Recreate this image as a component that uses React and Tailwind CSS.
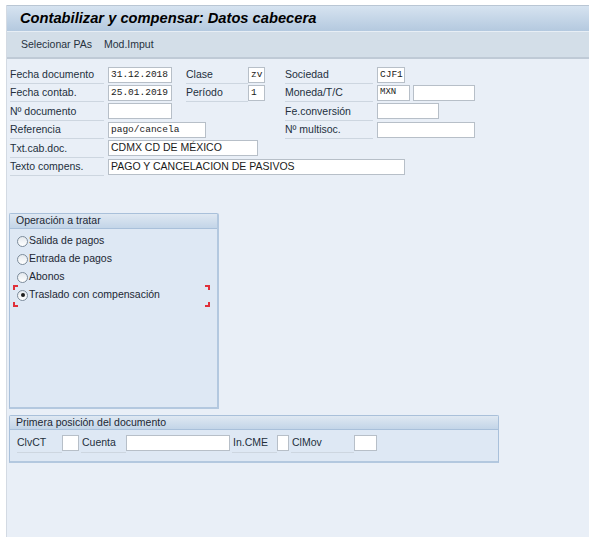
import { useState } from 'react';

const font = { fontFamily: '"Liberation Sans", Arial, sans-serif' };

function Label({ w, children, className = '' }) {
    return (
        <div
            className={`h-full flex items-center border-b border-[#cdd6e0] text-[10.5px] leading-none whitespace-nowrap ${className}`}
            style={{ width: w }}
        >
            <span className="text-[#23303d]">{children}</span>
        </div>
    );
}

function Field({ w, value = '', mono = false, className = '' }) {
    return (
        <div
            className={`h-[16px] bg-white border border-[#b7bfc8] flex items-center text-[#1a1a1a] whitespace-nowrap overflow-hidden ${mono ? 'pl-[2px] font-["Liberation_Mono",monospace] text-[9.5px]' : 'px-[2px] text-[10.5px]'} ${className}`}
            style={{ width: w }}
        >
            {value}
        </div>
    );
}

function Radio({ checked, label }) {
    return (
        <div className="h-[18px] flex items-center gap-[1px] text-[10.5px] text-[#1c2733]">
            <div className="w-[11px] h-[11px] rounded-full border border-[#7d8c9b] bg-gradient-to-b from-[#e4e9ee] to-white flex items-center justify-center">
                {checked && <div className="w-[4px] h-[4px] rounded-full bg-[#1d1d1d]" />}
            </div>
            <span>{label}</span>
        </div>
    );
}

function Corner({ className }) {
    return <div className={`absolute w-[5px] h-[5px] border-[#e0303a] ${className}`} />;
}

export default function App() {
    const [op, setOp] = useState('traslado');

    const options = [
        { id: 'salida', label: 'Salida de pagos' },
        { id: 'entrada', label: 'Entrada de pagos' },
        { id: 'abonos', label: 'Abonos' },
        { id: 'traslado', label: 'Traslado con compensación' },
    ];

    return (
        <div className="w-[589px] h-[537px] bg-white pt-[5px] pl-[6px] overflow-hidden" style={font}>
            <div className="h-full flex flex-col border-l border-[#d3dae3] bg-[#e9eff7]">
                {/* title */}
                <div className="h-[26px] flex items-center pl-[13px] border-t border-[#b9c6d4] bg-gradient-to-b from-[#d6e3f0] to-[#b4c9df]">
                    <h1 className="text-[14.7px] font-bold italic text-black">
                        Contabilizar y compensar: Datos cabecera
                    </h1>
                </div>
                {/* toolbar */}
                <div className="h-[28px] flex items-center gap-[12px] pl-[14px] border-t border-[#e7eef5] border-b-2 border-b-[#bfcad6] bg-[#d3dee8] text-[10.5px] text-[#27323e]">
                    <span>Selecionar PAs</span>
                    <span>Mod.Imput</span>
                </div>

                {/* header fields */}
                <div className="pl-[3px] pt-[7px] flex flex-col">
                    <div className="h-[18px] flex items-center">
                        <Label w={94}>Fecha documento</Label>
                        <Field w={64} value="31.12.2018" mono className="ml-[4px]" />
                        <Label w={62} className="ml-[14px]">Clase</Label>
                        <Field w={17} value="zv" mono />
                        <Label w={88} className="ml-[20px]">Sociedad</Label>
                        <Field w={28} value="CJF1" mono className="ml-[4px]" />
                    </div>
                    <div className="h-[18px] flex items-center">
                        <Label w={94}>Fecha contab.</Label>
                        <Field w={64} value="25.01.2019" mono className="ml-[4px]" />
                        <Label w={62} className="ml-[14px]">Período</Label>
                        <Field w={17} value="1" mono />
                        <Label w={88} className="ml-[20px]">Moneda/T/C</Label>
                        <Field w={33} value="MXN" mono className="ml-[4px] text-[9px]" />
                        <Field w={62} className="ml-[3px]" />
                    </div>
                    <div className="h-[18.5px] flex items-center">
                        <Label w={94}>Nº documento</Label>
                        <Field w={64} className="ml-[4px]" />
                        <div className="w-[113px]" />
                        <Label w={88}>Fe.conversión</Label>
                        <Field w={62} className="ml-[4px]" />
                    </div>
                    <div className="h-[18.5px] flex items-center">
                        <Label w={94}>Referencia</Label>
                        <Field w={98} value="pago/cancela" mono className="ml-[4px]" />
                        <div className="w-[79px]" />
                        <Label w={88}>Nº multisoc.</Label>
                        <Field w={98} className="ml-[4px]" />
                    </div>
                    <div className="h-[18.5px] flex items-center">
                        <Label w={94}>Txt.cab.doc.</Label>
                        <Field w={150} value="CDMX CD DE MÉXICO" className="ml-[4px]" />
                    </div>
                    <div className="h-[18.5px] flex items-center">
                        <Label w={94}>Texto compens.</Label>
                        <Field w={297} value="PAGO Y CANCELACION DE PASIVOS" className="ml-[4px]" />
                    </div>
                </div>

                {/* operation group */}
                <div className="ml-[2px] mt-[37px] w-[210px] h-[196px] flex flex-col border border-[#a9c0da] border-r-2 border-b-2 border-r-[#b3c8df] border-b-[#b3c8df] rounded-t-[2px] bg-[#dee8f4]">
                    <div className="h-[15px] flex items-center pl-[6px] border-b border-[#a9c0da] bg-gradient-to-b from-[#dfe8f2] to-[#c3d5e8] text-[10.5px] text-[#1c2733]">
                        Operación a tratar
                    </div>
                    <div className="pl-[6px] pt-[3px] flex flex-col">
                        {options.map(o => (
                            <div
                                key={o.id}
                                onClick={() => setOp(o.id)}
                                className={`relative pl-[1px] ${o.id === op ? 'mr-[8px]' : ''}`}
                            >
                                {o.id === op && (
                                    <>
                                        <Corner className="-left-[3px] -top-[1px] border-l-2 border-t-2" />
                                        <Corner className="-right-[1px] -top-[1px] border-r-2 border-t-2" />
                                        <Corner className="-left-[3px] -bottom-[3px] border-l-2 border-b-2" />
                                        <Corner className="-right-[1px] -bottom-[3px] border-r-2 border-b-2" />
                                    </>
                                )}
                                <Radio checked={o.id === op} label={o.label} />
                            </div>
                        ))}
                    </div>
                </div>

                {/* first position group */}
                <div className="ml-[2px] mt-[6px] w-[490px] h-[48px] flex flex-col border border-[#a9c0da] border-b-2 border-b-[#b3c8df] rounded-t-[2px] bg-[#dee8f4]">
                    <div className="h-[14px] flex items-center pl-[6px] border-b border-[#a9c0da] bg-gradient-to-b from-[#dfe8f2] to-[#c3d5e8] text-[10.5px] text-[#1c2733]">
                        Primera posición del documento
                    </div>
                    <div className="h-[21px] mt-[2px] pl-[7px] flex items-center">
                        <Label w={45}>ClvCT</Label>
                        <Field w={17} />
                        <Label w={45} className="ml-[2px] pl-[1px]">Cuenta</Label>
                        <Field w={104} />
                        <Label w={45} className="ml-[2px] pl-[1px]">In.CME</Label>
                        <Field w={12} />
                        <Label w={63} className="ml-[2px] pl-[1px]">ClMov</Label>
                        <Field w={23} />
                    </div>
                </div>
            </div>
        </div>
    );
}
